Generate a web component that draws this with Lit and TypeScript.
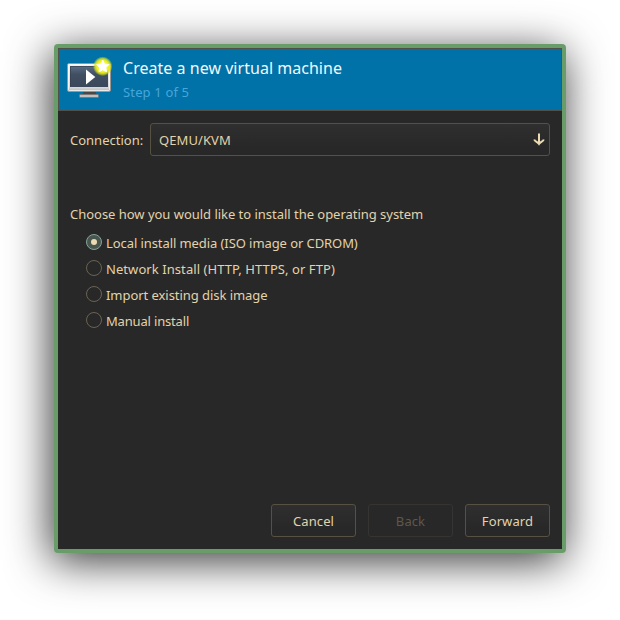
import { LitElement, html, css, svg } from "lit";
import { customElement, property, state } from "lit/decorators.js";
import { classMap } from "lit/directives/class-map.js";
import { styleMap } from "lit/directives/style-map.js";

const METHODS = [
  { label: "Local install media (ISO image or CDROM)", tracking: -0.08 },
  { label: "Network Install (HTTP, HTTPS, or FTP)", tracking: 0.07 },
  { label: "Import existing disk image", tracking: -0.05 },
  { label: "Manual install", tracking: -0.17 },
];

@customElement("vm-icon")
export class VmIcon extends LitElement {
  static styles = css`
    :host { display: block; width: 48px; height: 48px; }
    svg { display: block; }
  `;

  render() {
    return html`<svg width="48" height="48" viewBox="0 0 48 48">
      ${svg`<defs>
        <linearGradient id="frame" x1="0" y1="0" x2="0" y2="1">
          <stop offset="0" stop-color="#f4f4f4"/><stop offset=".85" stop-color="#d8d8d8"/><stop offset="1" stop-color="#b8b8b8"/>
        </linearGradient>
        <linearGradient id="screen" x1="0" y1="0" x2="0" y2="1">
          <stop offset="0" stop-color="#5c6d84"/><stop offset=".4" stop-color="#414f63"/><stop offset="1" stop-color="#3b485b"/>
        </linearGradient>
        <radialGradient id="glow">
          <stop offset="0" stop-color="#ffff70"/><stop offset=".6" stop-color="#f0f020"/><stop offset=".78" stop-color="#dfe51a" stop-opacity=".8"/><stop offset="1" stop-color="#c8dc20" stop-opacity="0"/>
        </radialGradient>
      </defs>
      <rect x="16" y="35" width="13" height="4" fill="#484848"/>
      <rect x="12.5" y="38.5" width="19" height="3" rx=".8" fill="#c0c0c0" stroke="#7c7876"/>
      <rect x="0.5" y="7.5" width="43" height="28" rx="1.5" fill="url(#frame)" stroke="#9a9694"/>
      <rect x="1.5" y="8.5" width="41" height="26" rx=".8" fill="none" stroke="#fff" stroke-opacity=".65"/>
      <rect x="3" y="10" width="38" height="21" fill="url(#screen)"/>
      <path d="M3.5 30.5V10.5H40.5" fill="none" stroke="#34404f" stroke-opacity=".7"/>
      <path d="M19 13.5v15l9.3-7.5z" fill="#fff"/>
      <circle cx="35.7" cy="10.3" r="9.9" fill="url(#glow)"/>
      <path d="M35.8 4.2l1.9 3.8 4.2.6-3 3 .7 4.2-3.8-2-3.8 2 .7-4.2-3-3 4.2-.6z" fill="#fff" stroke="#fff" stroke-width=".9" stroke-linejoin="round"/>`}
    </svg>`;
  }
}

@customElement("install-option")
export class InstallOption extends LitElement {
  @property() label = "";
  @property({ type: Number }) tracking = 0;
  @property({ type: Boolean }) checked = false;

  static styles = css`
    :host { display: flex; align-items: center; height: 26px; }
    .radio {
      box-sizing: border-box; width: 16px; height: 16px; margin: 0 4px 2px 0;
      border: 1px solid #6b6354; border-radius: 50%;
      display: flex; align-items: center; justify-content: center;
    }
    .radio.on { border-color: #83a598; background: #495650; }
    .radio.on::after { content: ""; width: 6px; height: 6px; border-radius: 50%; background: #ebdbb2; }
    .text { white-space: nowrap; }
  `;

  render() {
    return html`<span class=${classMap({ radio: true, on: this.checked })}></span><span class="text" style=${styleMap({ letterSpacing: `${this.tracking}px` })}>${this.label}</span>`;
  }
}

@customElement("app-root")
export class AppRoot extends LitElement {
  @state() private selected = 0;

  static styles = css`
    :host {
      display: block; box-sizing: border-box; width: 620px; height: 620px;
      padding: 44px 54px 67px; background: #fff; overflow: hidden;
      font: 13px/18px "Noto Sans", sans-serif; color: #e2d3ac;
    }
    .window {
      box-sizing: border-box; height: 509px; border: 4px solid #689d6a; border-radius: 4px;
      background: #282828; display: flex; flex-direction: column;
      box-shadow: -3px 8px 44px rgba(0, 0, 0, .8);
    }
    .header {
      box-sizing: border-box; height: 63px; flex: none; display: flex;
      background: #0072a8; border: 1px solid #504f49;
      padding: 7px 8px;
    }
    .titles { margin-left: 8px; }
    .title { font-size: 16px; line-height: 22px; margin-top: 1px; letter-spacing: .03px; color: #f2f8fb; white-space: nowrap; }
    .step { line-height: 18px; margin-top: 4px; letter-spacing: .15px; color: #48a5da; }
    .body { flex: 1; display: flex; flex-direction: column; padding: 12px; }
    .connection { display: flex; align-items: center; }
    .label { width: 80px; }
    .combo {
      box-sizing: border-box; flex: 1; height: 33px; padding: 0 4px 0 8px;
      border: 1px solid #565143; border-radius: 3px; letter-spacing: .08px;
      background: linear-gradient(#2f2f2f, #282828 75%);
      display: flex; align-items: center; justify-content: space-between;
    }
    .combo svg { margin-bottom: 1px; }
    .question { margin-top: 49px; letter-spacing: -.025px; }
    .options { margin: 7px 0 0 16px; }
    .actions { margin-top: auto; display: flex; justify-content: flex-end; gap: 12px; }
    button {
      box-sizing: border-box; width: 85px; height: 33px; padding: 0;
      border: 1px solid #565143; border-radius: 3px;
      background: linear-gradient(#2f2f2f, #282828 75%);
      font: inherit; letter-spacing: .1px; color: inherit;
    }
    button:disabled { border-color: #353432; background: #282828; color: #5f574a; }
  `;

  render() {
    return html`<div class="window">
      <div class="header">
        <vm-icon></vm-icon>
        <div class="titles">
          <div class="title">Create a new virtual machine</div>
          <div class="step">Step 1 of 5</div>
        </div>
      </div>
      <div class="body">
        <div class="connection">
          <span class="label">Connection:</span>
          <div class="combo">
            <span>QEMU/KVM</span>
            <svg width="12" height="14" viewBox="0 0 12 14">
              <path d="M6 1.5v11M1.2 7.5C2 9.6 4.6 10 6 12c1.4-2 4-2.4 4.8-4.5" fill="none" stroke="#ebdbb2" stroke-width="2"/>
            </svg>
          </div>
        </div>
        <div class="question">Choose how you would like to install the operating system</div>
        <div class="options">
          ${METHODS.map((m, i) => html`<install-option .label=${m.label} .tracking=${m.tracking} .checked=${i === this.selected}
            @click=${() => { this.selected = i; }}></install-option>`)}
        </div>
        <div class="actions">
          <button>Cancel</button>
          <button disabled>Back</button>
          <button>Forward</button>
        </div>
      </div>
    </div>`;
  }
}
